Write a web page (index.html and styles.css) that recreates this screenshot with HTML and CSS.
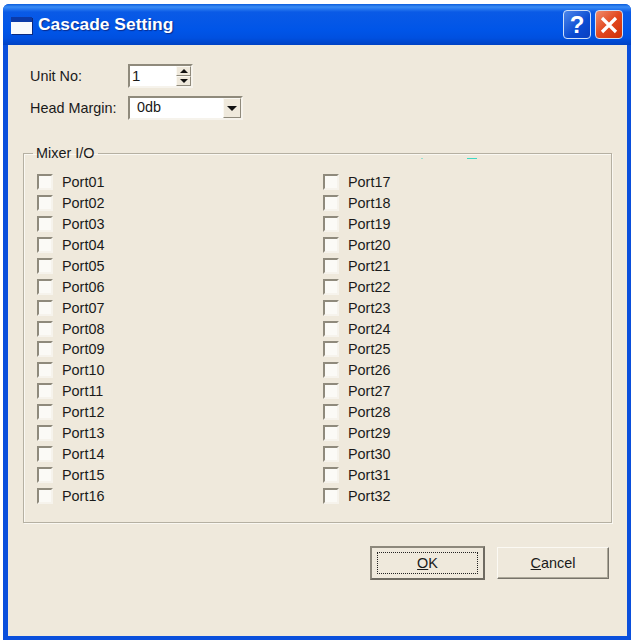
FILE: index.html
```html
<!DOCTYPE html>
<html lang="en">

<head>
    <meta charset="UTF-8">
    <title>Cascade Setting</title>
    <link rel="stylesheet" href="styles.css">
</head>

<body>
    <div class="window">
        <div class="titlebar">
            <span class="app-icon"></span>
            <span class="title">Cascade Setting</span>
            <span class="cap-btn help">?</span>
            <span class="cap-btn close">
                <svg width="20" height="20" viewBox="0 0 20 20">
                    <path d="M3 3 L17 17 M17 3 L3 17" stroke="#fff" stroke-width="3.2" fill="none" />
                </svg>
            </span>
        </div>

        <div class="client">
            <div class="row unit-row">
                <label class="row-label">Unit No:</label>
                <div class="spin">
                    <span class="spin-value">1</span>
                    <div class="spin-btns">
                        <span class="spin-btn"><i class="tri-up"></i></span>
                        <span class="spin-btn"><i class="tri-down"></i></span>
                    </div>
                </div>
            </div>
            <div class="row margin-row">
                <label class="row-label">Head Margin:</label>
                <div class="combo">
                    <span class="combo-value">0db</span>
                    <span class="combo-btn"><i class="tri-down big"></i></span>
                </div>
            </div>

            <fieldset class="group">
                <legend>Mixer I/O</legend>
                <span class="speck speck-a"></span>
                <span class="speck speck-b"></span>
                <div class="ports" id="ports"></div>
            </fieldset>

            <div class="buttons">
                <button class="btn default"><span class="focus"><u>O</u>K</span></button>
                <button class="btn"><span><u>C</u>ancel</span></button>
            </div>
        </div>
    </div>

    <script>
        let ports = document.getElementById("ports");
        for (let i = 1; i <= 32; i++) {
            let num = i < 10 ? "0" + i : i;
            ports.innerHTML += `<label class="port"><span class="check"></span>Port${num}</label>`;
        }
    </script>
</body>

</html>
```

FILE: styles.css
```css
body {
    margin: 0;
    background: #fff;
    font-family: "Liberation Sans", Arial, sans-serif;
    font-size: 14.4px;
    color: #1a1a1a;
}

.window {
    width: 628px;
    height: 636px;
    margin: 4px 0 0 3px;
    background: #0a4fdc;
    border-radius: 6px 6px 0 0;
    display: flex;
    flex-direction: column;
    overflow: hidden;
}

.titlebar {
    height: 41px;
    flex: none;
    display: flex;
    align-items: center;
    padding: 0 8px 0 8px;
    background: linear-gradient(#0b5ddc 0, #3a8cf5 3px, #0a5ae6 8px, #0055e8 26px, #0050e0 34px, #0042c4 41px);
}

.app-icon {
    width: 21px;
    height: 12px;
    background: #f7f9fd;
    border-top: 5px solid #0b3aa8;
    box-shadow: 1px 1px 0 #0b2a80;
    margin-top: 1px;
}

.title {
    flex: 1;
    margin-left: 6px;
    color: #fff;
    font-size: 17.4px;
    font-weight: bold;
    text-shadow: 1px 1px 1px #0a2c8c;
}

.cap-btn {
    width: 26px;
    height: 27px;
    margin-left: 4px;
    border: 1px solid #cfe0f8;
    border-radius: 4px;
    display: flex;
    align-items: center;
    justify-content: center;
}

.help {
    background: linear-gradient(135deg, #4c86ea, #0a4bd2 60%, #0a3fc0);
    color: #fff;
    font-size: 24px;
    font-weight: bold;
}

.close {
    background: linear-gradient(135deg, #f08d6e, #e2481f 50%, #cf3008);
}

.client {
    flex: 1;
    margin: 0 4px 4px 5px;
    background: #efe9dc;
    padding: 19px 0 0 15px;
    box-sizing: border-box;
    display: flex;
    flex-direction: column;
}

.row {
    display: flex;
    align-items: center;
    height: 24px;
}

.margin-row {
    margin-top: 8px;
}

.row-label {
    width: 105px;
    padding-left: 7px;
    box-sizing: border-box;
}

.spin,
.combo {
    box-sizing: border-box;
    height: 24px;
    background: #fff;
    border: 2px solid;
    border-color: #8f8a7c #f6f3ec #f6f3ec #8f8a7c;
    display: flex;
    justify-content: space-between;
}

.spin {
    width: 65px;
}

.combo {
    width: 115px;
}

.spin-value {
    padding-left: 2px;
    font-size: 15px;
    line-height: 19px;
}

.combo-value {
    padding-left: 7px;
    line-height: 19px;
}

.spin-btns {
    width: 15px;
    display: flex;
    flex-direction: column;
}

.spin-btn {
    flex: 1;
    background: #efe9dc;
    border: 1px solid;
    border-color: #fbf9f3 #8f8a7c #8f8a7c #fbf9f3;
    display: flex;
    align-items: center;
    justify-content: center;
}

.combo-btn {
    width: 18px;
    box-sizing: border-box;
    background: #efe9dc;
    border: 1px solid;
    border-color: #fbf9f3 #8f8a7c #8f8a7c #fbf9f3;
    display: flex;
    align-items: center;
    justify-content: center;
}

.tri-up,
.tri-down {
    width: 0;
    height: 0;
    border-left: 4px solid transparent;
    border-right: 4px solid transparent;
}

.tri-up {
    border-bottom: 4px solid #111;
}

.tri-down {
    border-top: 4px solid #111;
}

.tri-down.big {
    border-left-width: 5px;
    border-right-width: 5px;
    border-top-width: 5px;
}

.group {
    position: relative;
    width: 589px;
    height: 378px;
    box-sizing: border-box;
    margin: 25px 0 0 0;
    padding: 0 0 0 13px;
    border: 1px solid #b5b0a2;
    box-shadow: 1px 1px 0 #faf8f2, inset 1px 1px 0 #faf8f2;
    min-width: 0;
}

.group legend {
    padding: 0 4px 0 3px;
    margin-left: -4px;
}

.speck {
    position: absolute;
    height: 1px;
    background: #3fd8c4;
}

.speck-a {
    left: 397px;
    top: -3px;
    width: 2px;
    opacity: 0.5;
}

.speck-b {
    left: 443px;
    top: -3px;
    width: 10px;
}

.ports {
    margin-top: 11px;
    display: grid;
    grid-template-rows: repeat(16, 20.875px);
    grid-template-columns: 286px 1fr;
    grid-auto-flow: column;
}

.port {
    display: flex;
    align-items: center;
}

.check {
    width: 16px;
    height: 16px;
    box-sizing: border-box;
    margin-right: 9px;
    background: #fbfaf6;
    border: 2px solid;
    border-color: #8f8a7c #f6f3ec #f6f3ec #8f8a7c;
}

.buttons {
    display: flex;
    align-items: center;
    margin: 23px 0 0 347px;
    gap: 12px;
}

.btn {
    width: 112px;
    height: 32px;
    padding: 0;
    font: inherit;
    color: inherit;
    background: #efe9dc;
    border: 1px solid;
    border-color: #fbf9f3 #77736a #77736a #fbf9f3;
    box-shadow: inset -1px -1px 0 #aca899;
}

.btn.default {
    width: 115px;
    height: 34px;
    border: 2px solid #6f6b62;
    border-color: #8d887c #6f6b62 #6f6b62 #8d887c;
    box-shadow: none;
}

.btn span {
    display: block;
}

.focus {
    margin: 4px 5px;
    line-height: 20px;
    border: 1px dotted #222;
}
```
